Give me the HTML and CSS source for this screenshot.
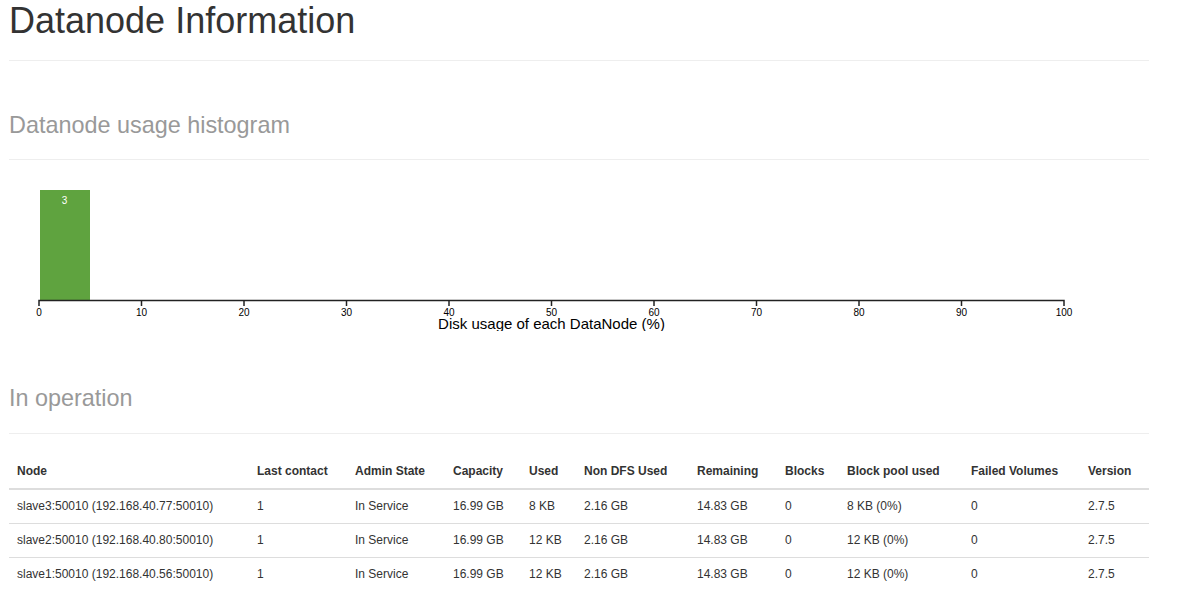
FILE: index.html
```html
<!DOCTYPE html>
<html lang="en">
<head>
    <meta charset="UTF-8">
    <title>Datanode Information</title>
    <link rel="stylesheet" href="styles.css">
</head>
<body>
    <div class="container">
        <div class="page-header">
            <h1>Datanode Information</h1>
        </div>

        <div class="page-header section">
            <h1><small>Datanode usage histogram</small></h1>
        </div>
        <div class="histogram">
            <svg width="1140" height="151" viewBox="0 0 1140 151">
                <g class="bar">
                    <rect x="31" y="10" width="50" height="110"></rect>
                    <text x="55.5" y="24">3</text>
                </g>
                <g class="axis">
                    <path class="domain" d="M30,126V120.5H1055V126"></path>
                    <line x1="132.5" y1="120" x2="132.5" y2="126"></line>
                    <line x1="235" y1="120" x2="235" y2="126"></line>
                    <line x1="337.5" y1="120" x2="337.5" y2="126"></line>
                    <line x1="440" y1="120" x2="440" y2="126"></line>
                    <line x1="542.5" y1="120" x2="542.5" y2="126"></line>
                    <line x1="645" y1="120" x2="645" y2="126"></line>
                    <line x1="747.5" y1="120" x2="747.5" y2="126"></line>
                    <line x1="850" y1="120" x2="850" y2="126"></line>
                    <line x1="952.5" y1="120" x2="952.5" y2="126"></line>
                    <text x="30" y="136">0</text>
                    <text x="132.5" y="136">10</text>
                    <text x="235" y="136">20</text>
                    <text x="337.5" y="136">30</text>
                    <text x="440" y="136">40</text>
                    <text x="542.5" y="136">50</text>
                    <text x="645" y="136">60</text>
                    <text x="747.5" y="136">70</text>
                    <text x="850" y="136">80</text>
                    <text x="952.5" y="136">90</text>
                    <text x="1055" y="136">100</text>
                    <text class="axis-label" x="542.5" y="148.5">Disk usage of each DataNode (%)</text>
                </g>
            </svg>
        </div>

        <div class="page-header section">
            <h1><small>In operation</small></h1>
        </div>
        <table class="table">
            <colgroup>
                <col style="width: 240px">
                <col style="width: 98px">
                <col style="width: 98px">
                <col style="width: 76px">
                <col style="width: 55px">
                <col style="width: 113px">
                <col style="width: 88px">
                <col style="width: 62px">
                <col style="width: 124px">
                <col style="width: 117px">
                <col style="width: 69px">
            </colgroup>
            <thead>
                <tr>
                    <th>Node</th>
                    <th>Last contact</th>
                    <th>Admin State</th>
                    <th>Capacity</th>
                    <th>Used</th>
                    <th>Non DFS Used</th>
                    <th>Remaining</th>
                    <th>Blocks</th>
                    <th>Block pool used</th>
                    <th>Failed Volumes</th>
                    <th>Version</th>
                </tr>
            </thead>
            <tbody>
                <tr>
                    <td>slave3:50010 (192.168.40.77:50010)</td>
                    <td>1</td>
                    <td>In Service</td>
                    <td>16.99 GB</td>
                    <td>8 KB</td>
                    <td>2.16 GB</td>
                    <td>14.83 GB</td>
                    <td>0</td>
                    <td>8 KB (0%)</td>
                    <td>0</td>
                    <td>2.7.5</td>
                </tr>
                <tr>
                    <td>slave2:50010 (192.168.40.80:50010)</td>
                    <td>1</td>
                    <td>In Service</td>
                    <td>16.99 GB</td>
                    <td>12 KB</td>
                    <td>2.16 GB</td>
                    <td>14.83 GB</td>
                    <td>0</td>
                    <td>12 KB (0%)</td>
                    <td>0</td>
                    <td>2.7.5</td>
                </tr>
                <tr>
                    <td>slave1:50010 (192.168.40.56:50010)</td>
                    <td>1</td>
                    <td>In Service</td>
                    <td>16.99 GB</td>
                    <td>12 KB</td>
                    <td>2.16 GB</td>
                    <td>14.83 GB</td>
                    <td>0</td>
                    <td>12 KB (0%)</td>
                    <td>0</td>
                    <td>2.7.5</td>
                </tr>
            </tbody>
        </table>
    </div>
</body>
</html>
```

FILE: styles.css
```css
body {
    margin: 0;
    font-family: "Liberation Sans", Arial, sans-serif;
    font-size: 12px;
    line-height: 1.42857143;
    color: #333;
    background-color: #fff;
}

.container {
    width: 1140px;
    margin-left: 9px;
    padding-top: 1px;
}

.page-header {
    padding-bottom: 9px;
    border-bottom: 1px solid #eee;
}

.page-header h1 {
    margin: 0 0 10px;
    font-size: 36px;
    font-weight: 500;
    line-height: 1.1;
    color: #333;
}

.page-header.section {
    margin-top: 40px;
}

.page-header small {
    font-size: 23.4px;
    font-weight: normal;
    line-height: 1;
    color: #999;
}

.histogram {
    margin-top: 20px;
    padding-bottom: 3px;
}

.histogram svg {
    display: block;
    overflow: hidden;
}

.bar rect {
    fill: #5fa33f;
}

.bar text {
    fill: #fff;
    font: 10px "Liberation Sans", Arial, sans-serif;
    text-anchor: middle;
}

.axis path,
.axis line {
    fill: none;
    stroke: #222;
    stroke-width: 1.5;
}

.axis text {
    fill: #000;
    font: 10px "Liberation Sans", Arial, sans-serif;
    text-anchor: middle;
}

.axis .axis-label {
    font-size: 15px;
}

.table {
    width: 100%;
    margin-top: 21px;
    border-collapse: collapse;
    table-layout: fixed;
}

.table th,
.table td {
    padding: 8px;
    text-align: left;
    white-space: nowrap;
}

.table th {
    font-weight: bold;
    border-bottom: 2px solid #ddd;
}

.table td {
    border-top: 1px solid #ddd;
}
```
